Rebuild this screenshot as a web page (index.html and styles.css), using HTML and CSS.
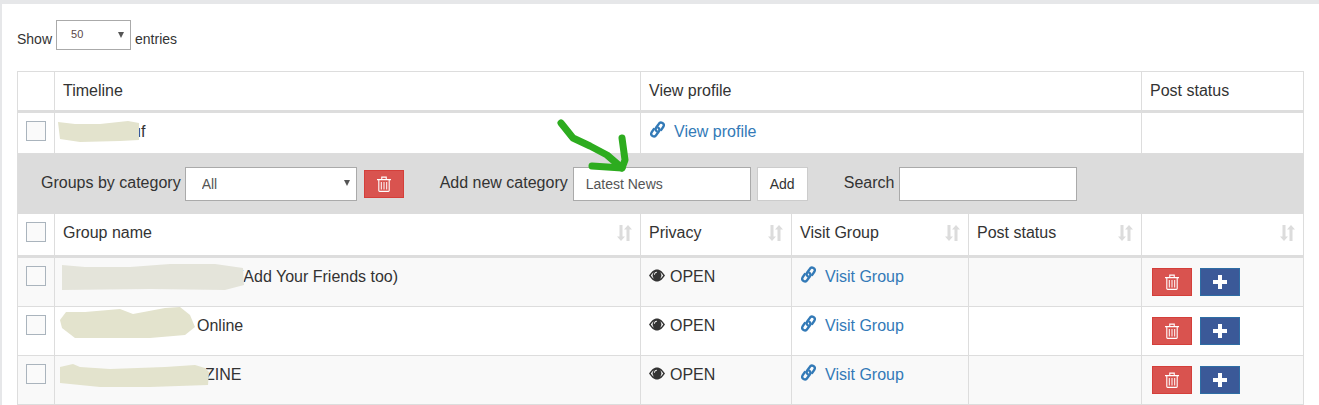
FILE: index.html
```html
<!DOCTYPE html>
<html lang="en">
<head>
<meta charset="utf-8">
<title>Groups</title>
<link rel="stylesheet" href="styles.css">
</head>
<body>
<svg width="0" height="0" class="defs">
  <defs>
    <symbol id="i-link" viewBox="0 0 14 16">
      <g fill="none" stroke="currentColor" stroke-width="2.200" stroke-linecap="round" stroke-linejoin="round">
        <path d="M6.300 9.600A2.400 2.400 0 0 1 5.600 6.400L8.200 2.800A2.500 2.500 0 0 1 12.500 5.400L10.500 8.400"/>
        <path d="M7.700 6.400A2.400 2.400 0 0 1 8.400 9.600L5.800 13.200A2.500 2.500 0 0 1 1.500 10.600L3.500 7.600"/>
      </g>
    </symbol>
    <symbol id="i-eye" viewBox="0 0 16 12">
      <path fill="currentColor" fill-rule="evenodd" d="M0 6C3 1.500 5.500 0 8 0s5 1.500 8 6c-3 4.500-5.500 6-8 6s-5-1.500-8-6zM1.800 6C2.800 7.500 3.800 8.500 4.900 9.200A5 5 0 0 1 4.900 2.800C3.800 3.500 2.800 4.500 1.800 6zM14.200 6C13.200 4.500 12.200 3.500 11.100 2.800A5 5 0 0 1 11.100 9.200C12.200 8.500 13.200 7.500 14.200 6zM5.800 5.200A2.400 2.400 0 0 1 8 3V2.200A3.200 3.200 0 0 0 5 5.200z"/>
    </symbol>
    <symbol id="i-trash" viewBox="0 0 14 16">
      <path fill="#fff" d="M0 3h14v1.200H0zM4.200 3V.6h5.600V3H8.700V1.700H5.300V3z"/>
      <path fill="none" stroke="#fff" stroke-width="1.100" d="M1.800 4v10.600q0 .8.800.8h8.800q.8 0 .8-.8V4"/>
      <path stroke="#fff" d="M4.300 6v7.500M7 6v7.500M9.700 6v7.500"/>
    </symbol>
    <symbol id="i-plus" viewBox="0 0 14 14">
      <path fill="#fff" d="M5 0h4v5h5v4H9v5H5V9H0V5h5z"/>
    </symbol>
    <symbol id="i-sort" viewBox="0 0 15 16">
      <path fill="#dcdcdc" d="M2.500 0h3v11.500H8L4 16 0 11.500h2.500zM9.500 16h3V4.500H15L11 0 7 4.500h2.500z"/>
    </symbol>
  </defs>
</svg>

<main class="panel">
  <div class="length">
    <span class="len-text">Show</span>
    <span class="select-wrap select-small">
      <select class="select-field" aria-label="Entries"><option>50</option></select>
    </span>
    <span class="len-text">entries</span>
  </div>

  <table class="grid">
    <colgroup>
      <col class="c1"><col class="c2"><col class="c3"><col class="c4"><col class="c5"><col class="c6">
    </colgroup>
    <thead>
      <tr class="row-head">
        <th></th>
        <th>Timeline</th>
        <th colspan="3">View profile</th>
        <th>Post status</th>
      </tr>
    </thead>
    <tbody>
      <tr class="row-timeline">
        <td><span class="check"></span></td>
        <td><span class="gap-1">uf</span></td>
        <td colspan="3"><a class="link" href="#"><svg class="ic-link"><use href="#i-link"/></svg>View profile</a></td>
        <td></td>
      </tr>
      <tr class="row-toolbar">
        <td colspan="6">
          <div class="toolbar">
            <label class="field"><span class="lab">Groups by category</span>
              <span class="select-wrap select-cat">
                <select class="select-field" aria-label="Category"><option>All</option></select>
              </span>
            </label>
            <button class="btn btn-red btn-tool" type="button"><svg class="ic-trash"><use href="#i-trash"/></svg></button>
            <label class="field field-new"><span class="lab">Add new category</span>
              <input class="text-input" type="text" value="Latest News">
            </label>
            <button class="btn-add" type="button">Add</button>
            <label class="field field-search"><span class="lab">Search</span>
              <input class="text-input" type="text">
            </label>
          </div>
        </td>
      </tr>
      <tr class="row-head row-head2">
        <th><span class="check"></span></th>
        <th><div class="sortable">Group name<svg class="ic-sort"><use href="#i-sort"/></svg></div></th>
        <th><div class="sortable">Privacy<svg class="ic-sort"><use href="#i-sort"/></svg></div></th>
        <th><div class="sortable">Visit Group<svg class="ic-sort"><use href="#i-sort"/></svg></div></th>
        <th><div class="sortable">Post status<svg class="ic-sort"><use href="#i-sort"/></svg></div></th>
        <th><div class="sortable end"><svg class="ic-sort"><use href="#i-sort"/></svg></div></th>
      </tr>
      <tr class="row-group row-first odd">
        <td><span class="check"></span></td>
        <td><span class="gap-2">(Add Your Friends too)</span></td>
        <td><svg class="ic-eye"><use href="#i-eye"/></svg>OPEN</td>
        <td><a class="link" href="#"><svg class="ic-link"><use href="#i-link"/></svg>Visit Group</a></td>
        <td></td>
        <td class="actions"><button class="btn btn-red" type="button"><svg class="ic-trash"><use href="#i-trash"/></svg></button><button class="btn btn-blue" type="button"><svg class="ic-plus"><use href="#i-plus"/></svg></button></td>
      </tr>
      <tr class="row-group">
        <td><span class="check"></span></td>
        <td><span class="gap-3">Online</span></td>
        <td><svg class="ic-eye"><use href="#i-eye"/></svg>OPEN</td>
        <td><a class="link" href="#"><svg class="ic-link"><use href="#i-link"/></svg>Visit Group</a></td>
        <td></td>
        <td class="actions"><button class="btn btn-red" type="button"><svg class="ic-trash"><use href="#i-trash"/></svg></button><button class="btn btn-blue" type="button"><svg class="ic-plus"><use href="#i-plus"/></svg></button></td>
      </tr>
      <tr class="row-group odd">
        <td><span class="check"></span></td>
        <td><span class="gap-4">ZINE</span></td>
        <td><svg class="ic-eye"><use href="#i-eye"/></svg>OPEN</td>
        <td><a class="link" href="#"><svg class="ic-link"><use href="#i-link"/></svg>Visit Group</a></td>
        <td></td>
        <td class="actions"><button class="btn btn-red" type="button"><svg class="ic-trash"><use href="#i-trash"/></svg></button><button class="btn btn-blue" type="button"><svg class="ic-plus"><use href="#i-plus"/></svg></button></td>
      </tr>
    </tbody>
  </table>
</main>

<svg class="markup" width="1319" height="405" viewBox="0 0 1319 405" aria-hidden="true">
  <g fill="#e3e3cd">
    <path d="M58 122 75 124 100 124 128 121 139 123 139 140 120 141 80 142 60 139z"/>
    <path fill="#e4e4da" d="M62 265 85 267 130 267 170 264 215 264 243 268 244 285 225 290 150 289 62 290z"/>
    <path d="M66 312 85 312 120 309 133 314 165 308 180 307 190 315 195 327 185 335 150 338 125 338 75 338 62 328 60 320z"/>
    <path d="M60 367 73 364 80 367 110 369 165 367 195 365 205 368 209 372 208 385 150 387 100 387 80 385 60 383z"/>
  </g>
  <g fill="none" stroke="#2dac1f" stroke-width="7" stroke-linecap="round" stroke-linejoin="round">
    <path d="M561 123 573 138 590 146 607 155 622 168"/>
    <path d="M592 166 622 168 625 160 622 138"/>
  </g>
</svg>
</body>
</html>
```

FILE: styles.css
```css
* { box-sizing: border-box; }

html, body { height: 405px; overflow: hidden; }

body {
  margin: 0;
  padding: 4px 0 0 2px;
  background: #e6e7e9;
  color: #333;
  font-family: "Liberation Sans", Arial, sans-serif;
  font-size: 14px;
  position: relative;
}

.defs { position: absolute; }

.panel {
  background: #fff;
  height: 401px;
  padding: 16px 15px 0;
}

.length {
  display: flex;
  align-items: flex-start;
  gap: 4px;
  height: 29px;
  margin-bottom: 22px;
}

.len-text { margin-top: 11px; }

.select-wrap {
  display: inline-block;
  position: relative;
}

.select-wrap::after {
  content: "";
  position: absolute;
  top: 50%;
  right: 7px;
  margin-top: -4px;
  border-left: 3px solid transparent;
  border-right: 3px solid transparent;
  border-top: 6px solid #555;
  pointer-events: none;
}

.select-field {
  appearance: none;
  display: block;
  width: 100%;
  height: 100%;
  background: #fff;
  border: 1px solid #aaa;
  font-family: inherit;
  color: #555;
  border-radius: 0;
}

.select-small {
  width: 75px;
  height: 30px;
}

.select-small .select-field {
  font-size: 11px;
  padding: 0 0 3px 14px;
  color: #5c4848;
}

.select-small::after { top: 12px; margin-top: 0; }

.select-cat {
  width: 172px;
  height: 34px;
}

.select-cat .select-field {
  font-size: 14px;
  padding-left: 16px;
}

.grid {
  width: 1286px;
  border-collapse: collapse;
  table-layout: fixed;
  font-size: 16px;
}

.c1 { width: 37px; }
.c2 { width: 586px; }
.c3 { width: 151px; }
.c4 { width: 177px; }
.c5 { width: 173px; }
.c6 { width: 162px; }

.grid th, .grid td {
  border: 1px solid #ddd;
  padding: 8px;
  text-align: left;
  vertical-align: top;
  line-height: 22px;
  font-weight: 400;
}

.row-head th {
  height: 40px;
  border-bottom: 3px solid #ddd;
  vertical-align: middle;
}

.row-timeline td { height: 42px; }

.row-toolbar td {
  height: 60px;
  padding: 0 0 0 23px;
  background: #dcdcdc;
  border-color: #dcdcdc;
  border-left-color: #ddd;
  vertical-align: middle;
}

.row-head2 th { height: 43px; padding-top: 8px; padding-bottom: 7px; vertical-align: top; }

.row-group td { height: 49px; }

.row-first td { height: 50px; }

.row-group.odd td { background: #f9f9f9; }

.check {
  display: block;
  width: 20px;
  height: 20px;
  background: #fafafa;
  border: 1px solid #aab4bd;
}

.gap-1 { padding-left: 69px; }
.gap-2 { padding-left: 175px; }
.gap-3 { padding-left: 134px; }
.gap-4 { padding-left: 142px; }

.link {
  color: #337ab7;
  text-decoration: none;
}

.ic-link {
  width: 15px;
  height: 17px;
  color: #337ab7;
  vertical-align: -1px;
  margin: -2px 9px 0 1px;
  overflow: visible;
}

.ic-eye {
  width: 16px;
  height: 13px;
  color: #333;
  margin-right: 5px;
  vertical-align: 0;
}

.toolbar {
  display: flex;
  align-items: center;
}

.field {
  display: flex;
  align-items: center;
  gap: 4px;
}

.lab { margin-bottom: 2px; }

.field-new { margin-left: 36px; gap: 5px; }
.field-search { margin-left: 36px; gap: 5px; }

.text-input {
  width: 178px;
  height: 34px;
  background: #fff;
  border: 1px solid #aaa;
  padding: 0 12px;
  font-family: inherit;
  font-size: 14px;
  color: #555;
  border-radius: 0;
}

.btn-add {
  width: 51px;
  height: 34px;
  margin-left: 6px;
  background: #fff;
  border: 1px solid #ccc;
  color: #333;
  font-family: inherit;
  font-size: 14px;
  padding: 0;
}

.btn {
  display: inline-flex;
  align-items: center;
  justify-content: center;
  width: 40px;
  height: 28px;
  padding: 0;
  border: 1px solid;
  border-radius: 0;
  vertical-align: top;
}

.btn-red { background: #d9534f; border-color: #d43f3a; }
.btn-blue { background: #3b5998; border-color: #2e6da4; margin-left: 8px; }
.btn-tool { margin-left: 7px; }

.ic-trash { width: 14px; height: 16px; }
.ic-plus { width: 14px; height: 14px; }

.actions { padding: 10px 10px 0 !important; }

.sortable {
  display: flex;
  justify-content: space-between;
  align-items: flex-start;
}

.sortable.end { justify-content: flex-end; }

.ic-sort {
  width: 15px;
  height: 16px;
  margin-top: 3px;
  flex: none;
}

.markup {
  position: absolute;
  left: 0;
  top: 0;
  pointer-events: none;
}
```
